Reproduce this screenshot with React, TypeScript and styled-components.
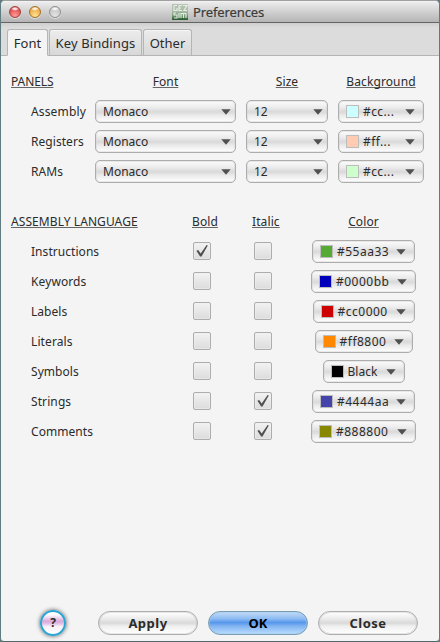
import React from 'react';
import styled, { createGlobalStyle } from 'styled-components';

const Global = createGlobalStyle`
  * { box-sizing: border-box; }
  html, body { margin: 0; padding: 0; }
  body { background: #5f7b80; font-family: "Noto Sans", "Open Sans", sans-serif; font-size: 12px; line-height: 18px; color: #2b2b2b; }
`;

const Window = styled.div`
  width: 440px;
  height: 642px;
  display: flex;
  flex-direction: column;
  overflow: hidden;
  border: 1px solid #5f7b80;
  border-top-color: #a09fa1;
  border-bottom-color: #52676a;
  border-radius: 5px 5px 4px 4px;
  background: #f4f4f4;
`;

const TitleBar = styled.header`
  flex: none;
  height: 22px;
  display: grid;
  grid-template-columns: 171px 1fr;
  align-items: center;
  background: linear-gradient(#ececec, #d2d2d2 45%, #b5b5b5);
  border-top: 1px solid #f2f2f2;
  border-bottom: 1px solid #656565;
`;

const Lights = styled.div`
  display: flex;
  gap: 8px;
  padding-left: 8px;
  height: 12px;
`;

const Light = styled.i<{ $edge: string; $mid: string; $glow: string }>`
  width: 12px;
  height: 12px;
  border-radius: 50%;
  border: 1px solid ${(p) => p.$edge};
  background: radial-gradient(ellipse 4px 2px at 50% 18%, #fff 0, #ffffff99 60%, transparent 100%),
    radial-gradient(circle at 50% 85%, ${(p) => p.$glow}, ${(p) => p.$mid} 75%);
  box-shadow: 0 1px 0 #ffffff80;
`;

const Title = styled.h1`
  display: flex;
  align-items: center;
  gap: 5px;
  margin: 0;
  font-size: 13px;
  font-weight: 400;
  letter-spacing: -0.12px;
  color: #3c3c3c;
  -webkit-text-stroke: 0.2px #3c3c3c;
`;

const TabStrip = styled.nav`
  flex: none;
  height: 33px;
  display: flex;
  align-items: flex-end;
  gap: 1px;
  padding-left: 6px;
  background: linear-gradient(#cfcfcf, #dcdcdc 5px);
  box-shadow: inset 0 -1px #b4b4b4;
`;

const Tab = styled.button<{ $active?: boolean; $width: number; $track: number }>`
  width: ${(p) => p.$width}px;
  height: 27px;
  padding: 1px 0 0;
  border: 1px solid #b5b5b5;
  border-bottom-color: ${(p) => (p.$active ? '#f4f4f4' : '#b4b4b4')};
  border-radius: 3px 3px 0 0;
  background: ${(p) => (p.$active ? '#f4f4f4' : 'linear-gradient(#ececec, #d8d8d8)')};
  box-shadow: ${(p) => (p.$active ? 'none' : 'inset 0 1px #f6f6f6')};
  font: 13px/18px "Noto Sans", sans-serif;
  letter-spacing: ${(p) => p.$track}px;
  color: #2b2b2b;
`;

const Content = styled.main`
  flex: 1;
  display: flex;
  flex-direction: column;
  padding: 16px 0 0 10px;
`;

const PanelGrid = styled.section`
  display: grid;
  grid-template-columns: 84px 151px 92px 86px;
  grid-template-rows: 25px repeat(3, 30px);
  align-items: center;
`;

const StyleGrid = styled.section`
  display: grid;
  grid-template-columns: 181px 60px 60px 103px;
  grid-template-rows: 25px repeat(7, 30px);
  align-items: center;
  margin-top: 25px;
`;

const Heading = styled.span<{ $track?: number; $width?: number }>`
  align-self: start;
  width: ${(p) => (p.$width ? p.$width + 'px' : 'auto')};
  line-height: 19px;
  text-align: ${(p) => (p.$width ? 'center' : 'left')};
  text-decoration: underline 1px #666;
  text-underline-offset: 1px;
  text-decoration-skip-ink: none;
  letter-spacing: ${(p) => p.$track ?? 0.1}px;
  white-space: nowrap;
`;

const Label = styled.span<{ $track: number }>`
  padding-left: 20px;
  letter-spacing: ${(p) => p.$track}px;
  white-space: nowrap;
`;

const Combo = styled.button<{ $width: number; $swatch?: boolean; $center?: boolean }>`
  width: ${(p) => p.$width}px;
  height: 23px;
  margin: -1px 0 0;
  justify-self: ${(p) => (p.$center ? 'center' : 'start')};
  display: flex;
  align-items: center;
  padding: 0 ${(p) => (p.$center || p.$swatch ? 8 : 4)}px 0 7px;
  border: 1px solid #adadad;
  border-radius: 5px;
  background: linear-gradient(#fcfcfc, #ececec 30%, #d9d9d9 52%, #eaeaea 68%, #fff);
  box-shadow: inset 0 0 0 1px #d5d5d580;
  font: 12px/18px "Noto Sans", sans-serif;
  color: #2b2b2b;
  white-space: nowrap;
`;

const Value = styled.span<{ $track: number }>`
  flex: 1;
  padding-top: 1px;
  text-align: left;
  letter-spacing: ${(p) => p.$track}px;
`;

const Swatch = styled.i<{ $color: string }>`
  width: 13px;
  height: 13px;
  margin-right: 4px;
  border: 1px solid #bdbdbd;
  background: ${(p) => p.$color};
`;

const Check = styled.span<{ $shift: number }>`
  width: 18px;
  height: 18px;
  margin: -2px 0 0 ${(p) => p.$shift}px;
  border: 1px solid #adadad;
  border-radius: 2px;
  background: linear-gradient(#f2f2f2, #dcdcdc);
  box-shadow: inset 0 0 0 1px #f0f0f080;
  display: grid;
  place-items: center;
`;

const Footer = styled.footer`
  display: flex;
  align-items: center;
  gap: 10px;
  margin-top: auto;
  padding: 0 0 5px 29px;
`;

const Help = styled.button`
  width: 26px;
  height: 26px;
  margin-right: 22px;
  padding: 0;
  border: 2px solid #28a5d2;
  border-radius: 50%;
  background: linear-gradient(#fff 12%, #d9a9da 42%, #e4c0e6 53%, #f8f1f8 66%, #fff);
  box-shadow: 0 0 4px #555;
  font: bold 12px/20px "Noto Sans", sans-serif;
  color: #2b2b2b;
`;

const Action = styled.button<{ $primary?: boolean; $track: number }>`
  width: 100px;
  height: 24px;
  padding: 0;
  border: 1px solid ${(p) => (p.$primary ? '#7a9db5' : '#adadad')};
  border-radius: 12px;
  background: ${(p) =>
    p.$primary
      ? 'linear-gradient(#c3dbf8, #8fbcf2 30%, #5697ec 48%, #83b5f2 65%, #b9dcff)'
      : 'linear-gradient(#fff, #ececec 30%, #d9d9d9 50%, #f0f0f0 65%, #fff)'};
  box-shadow: inset 0 0 0 1px ${(p) => (p.$primary ? '#a4cbe880' : '#d0d0d080')};
  font: bold 13px/20px "Noto Sans", sans-serif;
  letter-spacing: ${(p) => p.$track}px;
  color: ${(p) => (p.$primary ? '#000' : '#2b2b2b')};
`;

const Arrow = () => (
  <svg width="10" height="6" viewBox="0 0 10 6">
    <path d="M0.3 0.3h9.4L5 5.7z" fill="#505050" />
  </svg>
);

const Tick = () => (
  <svg width="14" height="14" viewBox="0 0 14 14">
    <path d="M1.4 6.8l1.8-.8 2.5 3.6L11.6 1l1.2.5L6.5 12.6H5.1z" fill="#505050" />
  </svg>
);

const AppIcon = () => (
  <svg width="16" height="16" viewBox="0 0 16 16">
    <defs>
      <linearGradient id="leaf" x2="0" y2="1">
        <stop stopColor="#b9c4b7" />
        <stop offset=".45" stopColor="#a9bda6" />
        <stop offset=".75" stopColor="#6f9670" />
        <stop offset="1" stopColor="#24582a" />
      </linearGradient>
    </defs>
    <path fill="url(#leaf)" d="M0 0h16v16H0z" />
    <path d="M2 1.5h3M2 1.5v5h3V4M7 1.5h3M7 4h2M7 1.5v5h3M11 1.5h4l-3 5h3M4 9H2v2h3v3H2M7 9v5M9 14V9.5h5V14M11.5 10v4" fill="none" stroke="#f2f6f1" strokeOpacity=".85" strokeWidth="1.2" />
  </svg>
);

const panels: [string, number, string, string][] = [
  ['Assembly', 0.15, '#ccffff', '#cc...'],
  ['Registers', 0.05, '#ffccb3', '#ff...'],
  ['RAMs', 0.1, '#ccffcc', '#cc...'],
];

type StyleRow = { name: string; track: number; bold?: boolean; italic?: boolean; color: string; value: string; width: number; vt: number };
const styles: StyleRow[] = [
  { name: 'Instructions', track: 0.05, bold: true, color: '#55aa33', value: '#55aa33', width: 103, vt: 0.5 },
  { name: 'Keywords', track: 0.1, color: '#0000bb', value: '#0000bb', width: 105, vt: 0.5 },
  { name: 'Labels', track: 0.05, color: '#cc0000', value: '#cc0000', width: 102, vt: 0.5 },
  { name: 'Literals', track: 0.1, color: '#ff8800', value: '#ff8800', width: 98, vt: 0.5 },
  { name: 'Symbols', track: 0.05, color: '#000000', value: 'Black', width: 82, vt: 0 },
  { name: 'Strings', track: 0.1, italic: true, color: '#4444aa', value: '#4444aa', width: 103, vt: 0.5 },
  { name: 'Comments', track: 0.05, italic: true, color: '#888800', value: '#888800', width: 105, vt: 0.5 },
];

export default function App() {
  return (
    <>
      <Global />
      <Window>
        <TitleBar>
          <Lights>
            <Light $edge="#9c4340" $mid="#dc4b4b" $glow="#ff9b96" />
            <Light $edge="#a2722f" $mid="#e9a541" $glow="#ffe393" />
            <Light $edge="#929292" $mid="#c4c4c4" $glow="#e4e4e4" />
          </Lights>
          <Title><AppIcon />Preferences</Title>
        </TitleBar>
        <TabStrip>
          <Tab $active $width={41} $track={0}>Font</Tab>
          <Tab $width={93} $track={0.1}>Key Bindings</Tab>
          <Tab $width={49} $track={0}>Other</Tab>
        </TabStrip>
        <Content>
          <PanelGrid>
            <Heading $track={-0.1}>PANELS</Heading>
            <Heading $width={141}>Font</Heading>
            <Heading $width={82}>Size</Heading>
            <Heading $width={86}>Background</Heading>
            {panels.map(([name, track, color, value]) => (
              <React.Fragment key={name}>
                <Label $track={track}>{name}</Label>
                <Combo $width={141}><Value $track={0}>Monaco</Value><Arrow /></Combo>
                <Combo $width={82}><Value $track={0}>12</Value><Arrow /></Combo>
                <Combo $width={86} $swatch><Swatch $color={color} /><Value $track={0.4}>{value}</Value><Arrow /></Combo>
              </React.Fragment>
            ))}
          </PanelGrid>
          <StyleGrid>
            <Heading $track={0.08}>ASSEMBLY LANGUAGE</Heading>
            <Heading>Bold</Heading>
            <Heading>Italic</Heading>
            <Heading $width={103}>Color</Heading>
            {styles.map((s) => (
              <React.Fragment key={s.name}>
                <Label $track={s.track}>{s.name}</Label>
                <Check $shift={1}>{s.bold && <Tick />}</Check>
                <Check $shift={2}>{s.italic && <Tick />}</Check>
                <Combo $width={s.width} $center><Swatch $color={s.color} /><Value $track={s.vt}>{s.value}</Value><Arrow /></Combo>
              </React.Fragment>
            ))}
          </StyleGrid>
          <Footer>
            <Help>?</Help>
            <Action $track={0.5}>Apply</Action>
            <Action $primary $track={0}>OK</Action>
            <Action $track={0.5}>Close</Action>
          </Footer>
        </Content>
      </Window>
    </>
  );
}
